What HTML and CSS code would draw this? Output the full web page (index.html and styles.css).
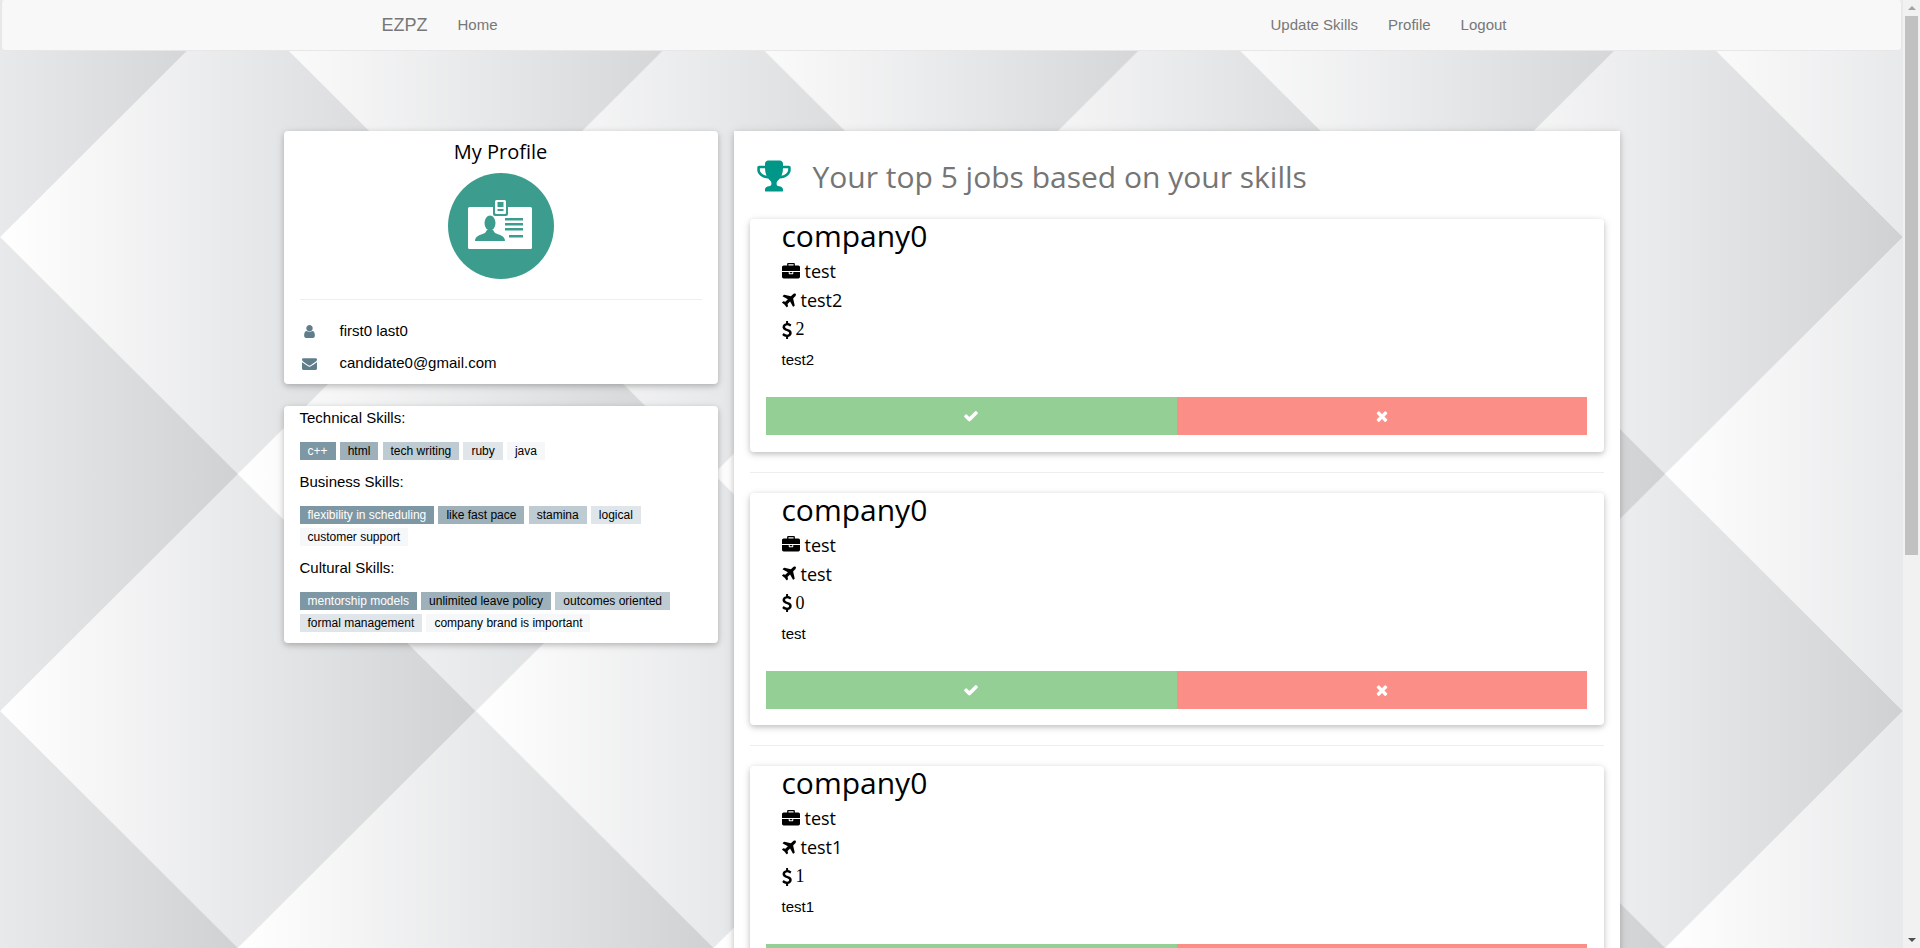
FILE: index.html
```html
<!doctype html>
<html lang="en">
  <head>
    <meta charset="utf-8" />
    <title>EZPZ - Profile</title>
    <link rel="stylesheet" href="styles.css">
  </head>
  <body>
    <svg class="icon-defs" aria-hidden="true">
      <defs>
        <symbol id="i-check" viewBox="0 0 1792 1792"><path d="M1671 566q0 40-28 68l-724 724-136 136q-28 28-68 28t-68-28l-136-136-362-362q-28-28-28-68t28-68l136-136q28-28 68-28t68 28l294 295 656-657q28-28 68-28t68 28l136 136q28 28 28 68z"/></symbol>
        <symbol id="i-times" viewBox="0 0 1792 1792"><path d="M1490 1322q0 40-28 68l-136 136q-28 28-68 28t-68-28l-294-294-294 294q-28 28-68 28t-68-28l-136-136q-28-28-28-68t28-68l294-294-294-294q-28-28-28-68t28-68l136-136q28-28 68-28t68 28l294 294 294-294q28-28 68-28t68 28l136 136q28 28 28 68t-28 68l-294 294 294 294q28 28 28 68z"/></symbol>
        <symbol id="i-user" viewBox="0 0 1792 1792"><path d="M1536 1399q0 109-62.5 187t-150.5 78h-854q-88 0-150.5-78t-62.5-187q0-85 8.5-160.5t31.5-152 58.5-131 94-89 134.5-34.5q131 128 313 128t313-128q76 0 134.5 34.5t94 89 58.5 131 31.5 152 8.5 160.5zm-256-887q0 159-112.5 271.5t-271.5 112.5-271.5-112.5-112.5-271.5 112.5-271.5 271.5-112.5 271.5 112.5 112.5 271.5z"/></symbol>
        <symbol id="i-envelope" viewBox="0 0 1792 1792"><path d="M1792 710v794q0 66-47 113t-113 47h-1472q-66 0-113-47t-47-113v-794q44 49 101 87 362 246 497 345 57 42 92.5 65.5t94.5 48 110 24.5h2q51 0 110-24.5t94.5-48 92.5-65.5q170-123 498-345 57-39 100-87zm0-294q0 79-49 151t-122 123q-376 261-468 325-10 7-42.5 30.5t-54 38-52 32.5-57.5 27-50 9h-2q-23 0-50-9t-57.5-27-52-32.5-54-38-42.5-30.5q-91-64-262-182.5t-205-142.5q-62-42-117-115.5t-55-136.5q0-78 41.5-130t118.5-52h1472q65 0 112.5 47t47.5 113z"/></symbol>
        <symbol id="i-briefcase" viewBox="0 0 1792 1792"><path d="M640 256h512v-128h-512v128zm1152 640v480q0 66-47 113t-113 47h-1472q-66 0-113-47t-47-113v-480h672v160q0 26 19 45t45 19h320q26 0 45-19t19-45v-160h672zm-768 0v128h-256v-128h256zm768-480v384h-1792v-384q0-66 47-113t113-47h352v-160q0-40 28-68t68-28h576q40 0 68 28t28 68v160h352q66 0 113 47t47 113z"/></symbol>
        <symbol id="i-plane" viewBox="190 0 1410 1792"><path d="M1568 160q44 52 12 148t-108 172l-161 161 160 696q5 19-12 33l-128 96q-7 6-19 6-4 0-7-1-15-3-21-16l-279-508-259 259 53 194q5 17-8 31l-96 96q-9 9-23 9h-2q-15-2-24-13l-189-252-252-189q-11-7-13-23-1-13 9-25l96-97q9-9 23-9 6 0 8 1l194 53 259-259-508-279q-14-8-17-24-2-16 9-27l128-128q14-13 30-8l665 159 160-160q76-76 172-108t148 12z"/></symbol>
        <symbol id="i-usd" viewBox="400 0 992 1792"><path d="M1362 1185q0 153-99.5 263.5t-258.5 136.5v175q0 14-9 23t-23 9h-135q-13 0-22.5-9.5t-9.5-22.5v-175q-66-9-127.5-31t-101.5-44.5-74-48-46.5-37.5-17.5-18q-17-21-2-41l103-135q7-10 23-12 15-2 24 9l2 2q113 99 243 125 37 8 74 8 81 0 142.5-43t61.5-122q0-28-15-53t-33.5-42-58.5-37.5-66-32-80-32.5q-39-16-61.5-25t-61.5-26.5-62.5-31-56.5-35.5-53.5-42.5-43.5-49-35.5-58-21-66.5-8.5-78q0-138 98-242t255-134v-180q0-13 9.5-22.5t22.5-9.5h135q14 0 23 9t9 23v176q57 6 110.5 23t87 33.5 63.5 37.5 39 29 15 14q17 18 5 38l-81 146q-8 15-23 16-14 3-27-7-3-3-14.5-12t-39-26.5-58.5-32-74.5-26-85.5-11.5q-95 0-155 43t-60 111q0 26 8.5 48t29.5 41.5 39.5 33 56 31 60.5 27 70 27.5q53 20 81 31.5t76 35 75.5 42.5 62 50 53 63.5 31.5 76.5 13 94z"/></symbol>
        <symbol id="i-trophy" viewBox="0 0 1792 1792"><path d="M522 883q-74-162-74-371h-256v96q0 78 94.5 162t235.5 113zm1078-275v-96h-256q0 209-74 371 141-29 235.5-113t94.5-162zm128-128v128q0 71-41.5 143t-112 130-173 97.5-215.5 44.5q-42 54-95 95-38 34-52.5 72.5t-14.5 89.5q0 54 30.5 91t97.5 37q75 0 133.5 45.5t58.5 114.5v64q0 14-9 23t-23 9h-832q-14 0-23-9t-9-23v-64q0-69 58.5-114.5t133.5-45.5q67 0 97.5-37t30.5-91q0-51-14.5-89.5t-52.5-72.5q-53-41-95-95-113-5-215.5-44.5t-173-97.5-112-130-41.5-143v-128q0-40 28-68t68-28h288v-96q0-66 47-113t113-47h576q66 0 113 47t47 113v96h288q40 0 68 28t28 68z"/></symbol>
      </defs>
    </svg>

    <div class="window">
      <div class="page">
        <!-- diamond wallpaper, 8 x 4 cells stretched over the window -->
        <svg class="wallpaper" aria-hidden="true">
          <defs>
            <linearGradient id="diamond-fill">
              <stop offset="0" stop-color="#ffffff" />
              <stop offset="0.5" stop-color="#e8e9ea" />
              <stop offset="1" stop-color="#d0d1d3" />
            </linearGradient>
            <pattern id="diamonds" patternUnits="userSpaceOnUse" width="475.75" height="474">
              <rect width="475.75" height="474" fill="#f4f4f5" />
              <polygon fill="url(#diamond-fill)" points="0,237 237.875,0 475.75,237 237.875,474" />
              <polygon fill="url(#diamond-fill)" points="-237.875,0 0,-237 237.875,0 0,237" />
              <polygon fill="url(#diamond-fill)" points="237.875,0 475.75,-237 713.625,0 475.75,237" />
              <polygon fill="url(#diamond-fill)" points="-237.875,474 0,237 237.875,474 0,711" />
              <polygon fill="url(#diamond-fill)" points="237.875,474 475.75,237 713.625,474 475.75,711" />
            </pattern>
          </defs>
          <rect width="100%" height="100%" fill="url(#diamonds)" />
        </svg>

        <nav class="navbar">
          <div class="nav-inner">
            <a class="brand" href="#">EZPZ</a>
            <a class="nav-link" href="#">Home</a>
            <span class="nav-spacer"></span>
            <a class="nav-link" href="#">Update Skills</a>
            <a class="nav-link" href="#">Profile</a>
            <a class="nav-link" href="#">Logout</a>
          </div>
        </nav>

        <main class="content">
          <aside class="sidebar">
            <section class="card profile-card">
              <h4 class="profile-title">My Profile</h4>
              <svg class="avatar" viewBox="0 0 106 106" aria-hidden="true">
                <circle cx="53" cy="53" r="53" fill="#3c9d8f" />
                <rect x="20" y="34" width="64" height="42" rx="1.5" fill="#fff" />
                <rect x="45" y="25" width="15" height="18" rx="2" fill="#3c9d8f" />
                <rect x="47" y="27" width="11" height="14" rx="1.5" fill="#fff" />
                <rect x="49.5" y="29" width="6" height="5" fill="#3c9d8f" />
                <rect x="49.5" y="36" width="6" height="2" fill="#3c9d8f" />
                <ellipse cx="42" cy="50" rx="5.5" ry="7.5" fill="#3c9d8f" />
                <path d="M27 68c0-5 5-6 10-8l2-3h6l2 3c5 2 10 3 10 8z" fill="#3c9d8f" />
                <rect x="57" y="45" width="18" height="2.5" fill="#3c9d8f" />
                <rect x="57" y="50" width="18" height="2.5" fill="#3c9d8f" />
                <rect x="57" y="55" width="18" height="2.5" fill="#3c9d8f" />
                <rect x="61" y="62" width="14" height="2.5" fill="#3c9d8f" />
              </svg>
              <hr class="rule" />
              <p class="contact-row">
                <svg class="contact-icon"><use href="#i-user" /></svg>
                first0 last0
              </p>
              <p class="contact-row">
                <svg class="contact-icon"><use href="#i-envelope" /></svg>
                candidate0@gmail.com
              </p>
            </section>

            <section class="card skills-card">
              <p class="skills-label">Technical Skills:</p>
              <p class="skills-tags">
                <span class="tag tag-1">c++</span>
                <span class="tag tag-2">html</span>
                <span class="tag tag-3">tech writing</span>
                <span class="tag tag-4">ruby</span>
                <span class="tag tag-5">java</span>
              </p>
              <p class="skills-label">Business Skills:</p>
              <p class="skills-tags">
                <span class="tag tag-1">flexibility in scheduling</span>
                <span class="tag tag-2">like fast pace</span>
                <span class="tag tag-3">stamina</span>
                <span class="tag tag-4">logical</span>
                <span class="tag tag-5">customer support</span>
              </p>
              <p class="skills-label">Cultural Skills:</p>
              <p class="skills-tags">
                <span class="tag tag-1">mentorship models</span>
                <span class="tag tag-2">unlimited leave policy</span>
                <span class="tag tag-3">outcomes oriented</span>
                <span class="tag tag-4">formal management</span>
                <span class="tag tag-5">company brand is important</span>
              </p>
            </section>
          </aside>

          <section class="jobs-panel">
            <h2 class="jobs-title">
              <svg class="trophy"><use href="#i-trophy" /></svg>
              Your top 5 jobs based on your skills
            </h2>

            <article class="card job-card">
              <h2 class="company">company0</h2>
              <p class="job-line"><svg class="job-icon"><use href="#i-briefcase" /></svg> test</p>
              <p class="job-line"><svg class="job-icon job-icon-plane"><use href="#i-plane" /></svg> test2</p>
              <p class="job-line"><svg class="job-icon job-icon-usd"><use href="#i-usd" /></svg> <span class="salary">2</span></p>
              <p class="job-desc">test2</p>
              <div class="job-actions">
                <button class="btn-accept" type="button"><svg class="btn-icon"><use href="#i-check" /></svg></button>
                <button class="btn-reject" type="button"><svg class="btn-icon"><use href="#i-times" /></svg></button>
              </div>
            </article>
            <hr class="rule job-rule" />

            <article class="card job-card">
              <h2 class="company">company0</h2>
              <p class="job-line"><svg class="job-icon"><use href="#i-briefcase" /></svg> test</p>
              <p class="job-line"><svg class="job-icon job-icon-plane"><use href="#i-plane" /></svg> test</p>
              <p class="job-line"><svg class="job-icon job-icon-usd"><use href="#i-usd" /></svg> <span class="salary">0</span></p>
              <p class="job-desc">test</p>
              <div class="job-actions">
                <button class="btn-accept" type="button"><svg class="btn-icon"><use href="#i-check" /></svg></button>
                <button class="btn-reject" type="button"><svg class="btn-icon"><use href="#i-times" /></svg></button>
              </div>
            </article>
            <hr class="rule job-rule" />

            <article class="card job-card">
              <h2 class="company">company0</h2>
              <p class="job-line"><svg class="job-icon"><use href="#i-briefcase" /></svg> test</p>
              <p class="job-line"><svg class="job-icon job-icon-plane"><use href="#i-plane" /></svg> test1</p>
              <p class="job-line"><svg class="job-icon job-icon-usd"><use href="#i-usd" /></svg> <span class="salary">1</span></p>
              <p class="job-desc">test1</p>
              <div class="job-actions">
                <button class="btn-accept" type="button"><svg class="btn-icon"><use href="#i-check" /></svg></button>
                <button class="btn-reject" type="button"><svg class="btn-icon"><use href="#i-times" /></svg></button>
              </div>
            </article>
          </section>
        </main>
      </div>

      <div class="scrollbar" aria-hidden="true">
        <span class="scroll-arrow scroll-up"></span>
        <span class="scroll-thumb"></span>
        <span class="scroll-arrow scroll-down"></span>
      </div>
    </div>
  </body>
</html>
```

FILE: styles.css
```css
html {
  font: 15px/1.5 "Liberation Sans", Arial, sans-serif;
  color: #000;
}

body {
  margin: 0;
  height: 948px;
  overflow: hidden;
}

p, h2, h4 {
  margin: 0;
  font-weight: 400;
}

.icon-defs {
  display: none;
}

.window {
  display: flex;
  height: 948px;
}

.page {
  position: relative;
  flex: 1;
  min-width: 0;
  overflow: hidden;
}

.wallpaper {
  position: absolute;
  top: 0;
  left: 0;
  width: 100%;
  height: 100%;
}

.scrollbar {
  width: 17px;
  display: flex;
  flex-direction: column;
  align-items: center;
  background: #f1f1f1;
}

.scroll-arrow {
  width: 0;
  height: 0;
  border-left: 4px solid transparent;
  border-right: 4px solid transparent;
}

.scroll-up {
  margin: 6px 0 6px;
  border-bottom: 4px solid #a3a3a3;
}

.scroll-down {
  margin: auto 0 6px;
  border-top: 4px solid #505050;
}

.scroll-thumb {
  width: 13px;
  height: 539px;
  background: #c1c1c1;
}

/* nav */
.navbar {
  position: relative;
  height: 49px;
  margin: 0 1px;
  background: #f8f8f8;
  border: 1px solid #e7e7e7;
  border-top-color: #f8f8f8;
  border-radius: 4px;
}

.nav-inner {
  display: flex;
  width: 1170px;
  margin: 0 auto;
}

.nav-inner a {
  display: block;
  padding: 14px 15px;
  line-height: 20px;
  color: #777;
  text-decoration: none;
}

.nav-inner .brand {
  font-size: 18px;
}

.nav-spacer {
  flex: 1;
}

.nav-inner a:last-child {
  margin-right: 15px;
}

/* layout */
.content {
  position: relative;
  display: grid;
  grid-template-columns: 434px 886px;
  gap: 16px;
  align-items: start;
  width: 1336px;
  margin: 80px auto 0;
}

.card {
  background: #fff;
  border-radius: 4px;
  box-shadow: 0 2px 5px 0 rgba(0, 0, 0, .16), 0 2px 10px 0 rgba(0, 0, 0, .12);
}

.rule {
  margin: 0;
  border: 0;
  border-top: 1px solid #eee;
}

/* left column */
.sidebar {
  display: flex;
  flex-direction: column;
  gap: 22px;
}

.profile-card {
  height: 253px;
  padding: 0 16px;
  box-sizing: border-box;
  text-align: center;
}

.profile-title {
  padding-top: 6px;
  font: 20px/30px "Open Sans", sans-serif;
}

.avatar {
  display: block;
  width: 106px;
  height: 106px;
  margin: 6px auto 20px;
}

.contact-row {
  display: flex;
  align-items: center;
  height: 32px;
  text-align: left;
}

.profile-card .rule {
  margin-bottom: 15px;
}

.contact-icon {
  width: 15px;
  height: 15px;
  margin: 0 23px 0 2px;
  fill: #607d8b;
}

.skills-card {
  padding: 1px 16px 10px;
}

.skills-label {
  line-height: 22px;
}

.skills-tags {
  margin: 10px 0;
  line-height: 22px;
}

.skills-tags:last-child {
  margin-bottom: 0;
}

.tag {
  display: inline-block;
  padding: 0 8px;
  font-size: 12px;
  line-height: 18px;
}

.tag-1 {
  background: #7d97a5;
  color: #fff;
}

.tag-2 {
  background: #9eb1bb;
}

.tag-3 {
  background: #becbd2;
}

.tag-4 {
  background: #dfe5e8;
}

.tag-5 {
  background: #f5f7f8;
}

/* jobs */
.jobs-panel {
  padding: 0 16px;
  height: 900px;
  background: #fff;
  box-shadow: 0 2px 5px 0 rgba(0, 0, 0, .16), 0 2px 10px 0 rgba(0, 0, 0, .12);
}

.jobs-title {
  display: flex;
  align-items: center;
  height: 88px;
  padding: 2px 0 0 6px;
  font: 30px/45px "Open Sans", sans-serif;
  color: #757575;
  box-sizing: border-box;
}

.trophy {
  width: 36px;
  height: 36px;
  margin-right: 21px;
  fill: #009688;
}

.job-card {
  height: 232.5px;
  padding: 0 17px 0 16px;
  box-sizing: border-box;
}

.company {
  padding-left: 16px;
  margin-bottom: 5px;
  font: 30px/33px "Open Sans", sans-serif;
}

.job-line {
  display: flex;
  align-items: center;
  gap: 5px;
  height: 29px;
  padding-left: 16px;
  font: 18px/29px "Open Sans", sans-serif;
}

.job-icon {
  width: 18px;
  height: 18px;
}

.job-icon-plane {
  width: 14px;
}

.job-icon-usd {
  width: 10px;
}

.job-icon-usd + .salary {
  margin-left: -1px;
}

.salary {
  font-family: "Liberation Serif", serif;
}

.job-desc {
  margin-top: 1px;
  padding-left: 16px;
  line-height: 29px;
}

.job-actions {
  display: flex;
  margin-top: 23px;
}

.job-actions button {
  height: 38px;
  padding: 0;
  border: 0;
  display: flex;
  align-items: center;
  justify-content: center;
}

.job-actions .btn-accept {
  flex: 0 0 411px;
  background: #94cf96;
}

.job-actions .btn-reject {
  flex: 1;
  background: #fb8e86;
}

.btn-icon {
  width: 16px;
  height: 16px;
  fill: #fff;
}

.job-rule {
  margin: 20px 0;
}
```
